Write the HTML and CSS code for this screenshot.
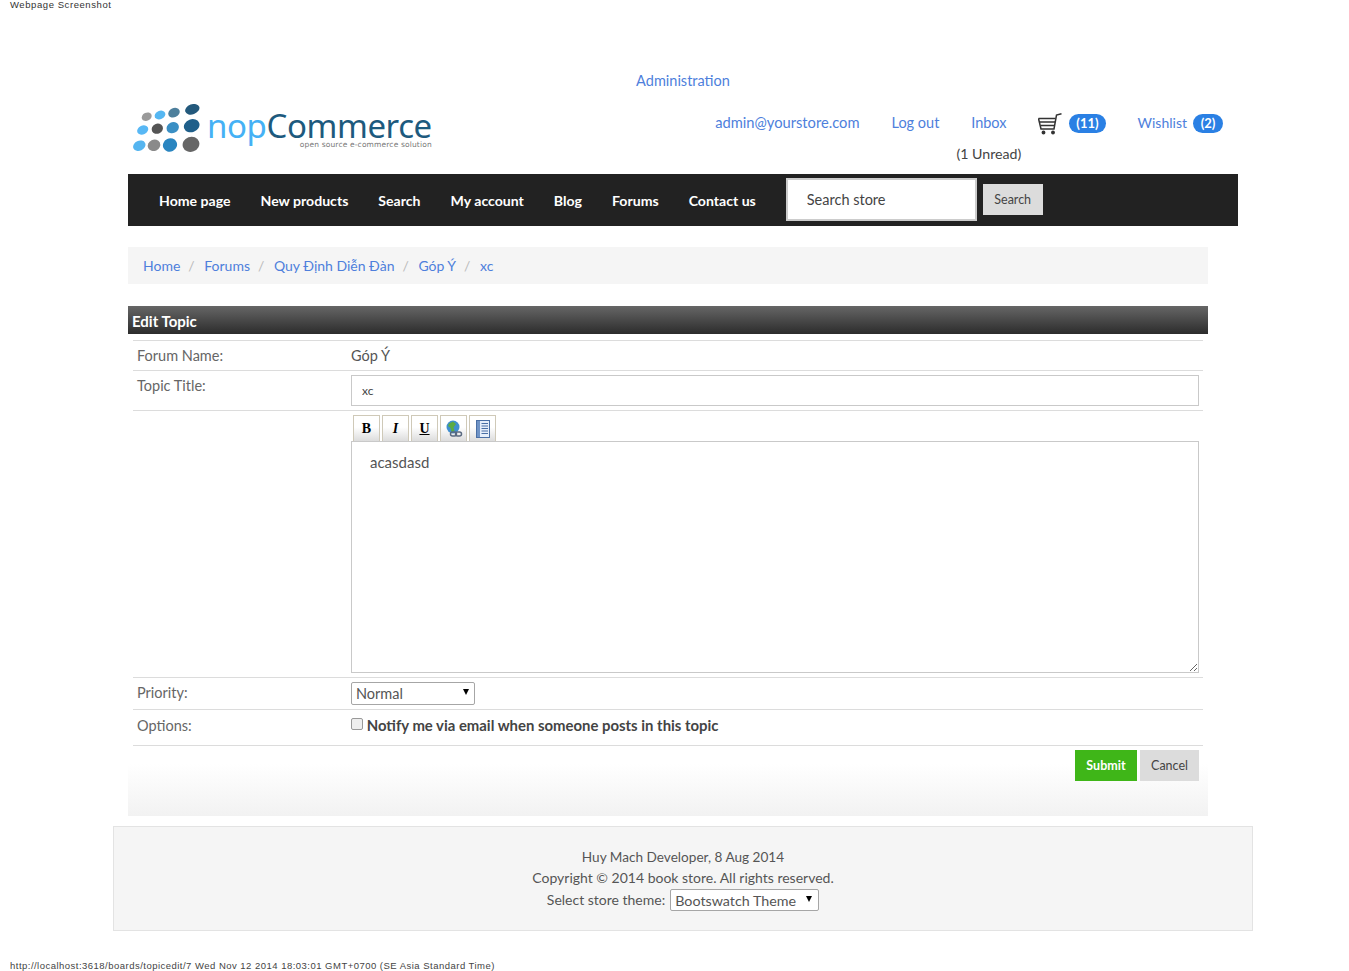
FILE: index.html
```html
<!DOCTYPE html>
<html lang="en">
<head>
    <meta charset="UTF-8">
    <title>Edit Topic</title>
    <link rel="stylesheet" href="styles.css">
</head>
<body>
    <div class="shot-label">Webpage Screenshot</div>

    <div class="master">
        <div class="admin-row"><a href="#">Administration</a></div>

        <div class="header">
            <a class="logo" href="#">
                <svg class="logo-dots" width="68" height="50" viewBox="0 0 68 50">
                    <ellipse cx="13.7" cy="12.7" rx="5.2" ry="4" fill="#9a9a9a" transform="rotate(-25 13.7 12.7)"/>
                    <ellipse cx="27" cy="11" rx="5.6" ry="4.2" fill="#55b7f2" transform="rotate(-25 27 11)"/>
                    <ellipse cx="41" cy="8.7" rx="6" ry="4.6" fill="#4d7f9c" transform="rotate(-25 41 8.7)"/>
                    <ellipse cx="59.3" cy="5.3" rx="7.4" ry="5" fill="#23597c" transform="rotate(-20 59.3 5.3)"/>
                    <ellipse cx="9.7" cy="26" rx="5.8" ry="4.4" fill="#58b8f5" transform="rotate(-25 9.7 26)"/>
                    <ellipse cx="24.3" cy="24.7" rx="5.8" ry="5" fill="#555" transform="rotate(-25 24.3 24.7)"/>
                    <ellipse cx="39.7" cy="23.7" rx="6.4" ry="5.4" fill="#3a8fc4" transform="rotate(-25 39.7 23.7)"/>
                    <ellipse cx="58.7" cy="21.7" rx="8" ry="6.4" fill="#1f5f8a" transform="rotate(-20 58.7 21.7)"/>
                    <ellipse cx="6.3" cy="41.7" rx="6.4" ry="5" fill="#55b5f0" transform="rotate(-25 6.3 41.7)"/>
                    <ellipse cx="21" cy="41.3" rx="6.4" ry="5.6" fill="#8a8a8a" transform="rotate(-25 21 41.3)"/>
                    <ellipse cx="37" cy="41" rx="7.2" ry="6.6" fill="#2a85c0" transform="rotate(-25 37 41)"/>
                    <ellipse cx="58" cy="40.3" rx="8.5" ry="7.5" fill="#666" transform="rotate(-20 58 40.3)"/>
                </svg>
                <span class="logo-text">
                    <span class="logo-name"><span class="logo-nop">nop</span>Commerce</span>
                    <span class="logo-tag">open source e-commerce solution</span>
                </span>
            </a>
            <ul class="header-links">
                <li class="email"><a href="#">admin@yourstore.com</a></li>
                <li><a href="#">Log out</a></li>
                <li class="inbox"><a href="#">Inbox</a><span class="unread">(1 Unread)</span></li>
                <li class="cart">
                    <svg width="24" height="22" viewBox="0 0 24 22" fill="none" stroke="#333" stroke-width="1.5">
                        <path d="M0.5 5.5H17.5M2 9H17M3 12.5H16.5"/>
                        <path d="M0.5 5.5L3 16H16L18.5 2L23.5 0.8"/>
                        <circle cx="5.5" cy="19.5" r="1.2" fill="#333"/>
                        <circle cx="15" cy="19.5" r="1.2" fill="#333"/>
                    </svg>
                    <span class="badge">(11)</span>
                </li>
                <li class="wishlist"><a href="#">Wishlist</a><span class="badge">(2)</span></li>
            </ul>
        </div>

        <div class="navbar">
            <a href="#">Home page</a>
            <a href="#">New products</a>
            <a href="#">Search</a>
            <a href="#">My account</a>
            <a href="#">Blog</a>
            <a href="#">Forums</a>
            <a href="#">Contact us</a>
            <input class="search-input" type="text" placeholder="Search store">
            <button class="btn btn-grey search-btn">Search</button>
        </div>

        <div class="content">
            <div class="breadcrumb">
                <a href="#">Home</a><span class="sep">/</span>
                <a href="#">Forums</a><span class="sep">/</span>
                <a href="#">Quy Định Diễn Đàn</a><span class="sep">/</span>
                <a href="#">Góp Ý</a><span class="sep">/</span>
                <a href="#">xc</a>
            </div>

            <div class="title-bar">Edit Topic</div>

            <div class="edit-form">
                <div class="row row-forum">
                    <div class="label">Forum Name:</div>
                    <div class="value">Góp Ý</div>
                </div>
                <div class="row row-title">
                    <div class="label">Topic Title:</div>
                    <div class="value"><input class="title-input" type="text" value="xc"></div>
                </div>
                <div class="row row-body">
                    <div class="label"></div>
                    <div class="value">
                        <div class="toolbar">
                            <button class="tool tool-b">B</button>
                            <button class="tool tool-i">I</button>
                            <button class="tool tool-u">U</button>
                            <button class="tool">
                                <svg width="18" height="18" viewBox="0 0 18 18">
                                    <circle cx="8" cy="7" r="6.5" fill="#3f8fd0"/>
                                    <path d="M4 3.5L8 1.5L11 4L8.5 7.5L9.5 11L6.5 12L5.5 8L3 6Z" fill="#5bab45"/>
                                    <g fill="none" stroke="#5a6a80" stroke-width="1.5">
                                        <rect x="5.5" y="12" width="6" height="4" rx="2"/>
                                        <rect x="10.5" y="12" width="6" height="4" rx="2"/>
                                    </g>
                                </svg>
                            </button>
                            <button class="tool">
                                <svg width="16" height="18" viewBox="0 0 16 18">
                                    <rect x="1.5" y="0.5" width="13" height="17" fill="#e6eefa" stroke="#4a6fa5"/>
                                    <rect x="2" y="1" width="3" height="16" fill="#6f93c6"/>
                                    <path d="M6.5 3.5H13M6.5 6H13M6.5 8.5H13M6.5 11H13M6.5 13.5H13" stroke="#4a6fa5"/>
                                </svg>
                            </button>
                        </div>
                        <textarea class="body-area">acasdasd</textarea>
                    </div>
                </div>
                <div class="row row-priority">
                    <div class="label">Priority:</div>
                    <div class="value">
                        <div class="select-box priority-select">Normal<span class="arrow"></span></div>
                    </div>
                </div>
                <div class="row row-options">
                    <div class="label">Options:</div>
                    <div class="value">
                        <input class="check" type="checkbox">
                        <strong>Notify me via email when someone posts in this topic</strong>
                    </div>
                </div>
                <div class="row-buttons">
                    <button class="btn btn-green">Submit</button>
                    <button class="btn btn-grey btn-cancel">Cancel</button>
                </div>
            </div>
        </div>
    </div>

    <div class="footer">
        <div class="footer-credit">Huy Mach Developer, 8 Aug 2014</div>
        <div>Copyright © 2014 book store. All rights reserved.</div>
        <div class="theme-row">Select store theme:
            <div class="select-box theme-select">Bootswatch Theme<span class="arrow"></span></div>
        </div>
    </div>

    <div class="shot-url">http://localhost:3618/boards/topicedit/7 Wed Nov 12 2014 18:03:01 GMT+0700 (SE Asia Standard Time)</div>
</body>
</html>
```

FILE: styles.css
```css
body {
    margin: 0;
    font-family: "Lato", "Noto Sans", sans-serif;
    font-size: 14.5px;
    line-height: 21px;
    color: #555;
    background: #fff;
    height: 971px;
    overflow: hidden;
}
a {
    color: #4e7fdc;
    text-decoration: none;
}
.shot-label {
    margin-left: 10px;
    height: 10px;
    font-family: "Liberation Sans", sans-serif;
    font-size: 9.5px;
    line-height: 10px;
    letter-spacing: 0.57px;
    color: #333;
}
.master {
    width: 1110px;
    margin-left: 128px;
}
.admin-row {
    width: 1110px;
    padding-top: 60px;
    text-align: center;
}
.header {
    display: flex;
    justify-content: space-between;
    height: 82px;
    margin-top: 1px;
}
.logo {
    display: flex;
    height: 50px;
    margin: 12px 0 0 5px;
}
.logo-text {
    display: flex;
    flex-direction: column;
    margin-left: 6px;
}
.logo-name {
    font-family: "Noto Sans", sans-serif;
    font-size: 33px;
    line-height: 30px;
    color: #1d5a7e;
    letter-spacing: -0.4px;
    margin-top: 7px;
}
.logo-nop {
    color: #45b1f5;
}
.logo-tag {
    font-family: "DejaVu Sans", sans-serif;
    font-size: 7.5px;
    line-height: 8px;
    letter-spacing: 0.15px;
    color: #777;
    text-align: right;
}
.header-links {
    display: flex;
    gap: 32px;
    list-style: none;
    margin: 20px 15px 0 0;
    padding: 0;
}
.header-links li {
    display: flex;
    align-items: flex-start;
    gap: 6px;
}
.header-links .email {
    font-size: 14.7px;
}
.header-links .inbox {
    flex-direction: column;
    align-items: center;
    gap: 10px;
    width: 35px;
}
.unread {
    white-space: nowrap;
    color: #444;
    font-size: 14.2px;
}
.badge {
    display: inline-block;
    min-width: 18px;
    padding: 0 6px;
    height: 19px;
    margin-top: 2px;
    border-radius: 10px;
    background: #2a80e4;
    color: #fff;
    font-size: 13px;
    font-weight: bold;
    line-height: 19px;
    text-align: center;
}
.header-links .cart {
    gap: 7px;
}
.cart svg {
    margin-top: 1px;
}
.cart .badge {
    padding: 0 7px;
}
.wishlist a {
    font-size: 14px;
}
.navbar {
    display: flex;
    align-items: center;
    gap: 30px;
    height: 52px;
    padding-left: 31px;
    background: #222;
    box-sizing: border-box;
}
.navbar a {
    color: #fff;
    font-weight: bold;
    font-size: 14.1px;
    margin-top: 1px;
}
.search-input {
    width: 191px;
    height: 43px;
    box-sizing: border-box;
    margin: -1px 0 0 0;
    padding: 0 18px 0 19px;
    border: 2px solid #ccc;
    background: #fff;
    font: 14.5px "Lato", sans-serif;
    color: #444;
}
.search-input::placeholder {
    color: #444;
    opacity: 1;
}
.navbar .search-btn {
    margin: -1px 0 0 -24px;
}
.btn {
    height: 31px;
    padding: 0 11.5px;
    border: 0;
    font: 12.5px "Lato", sans-serif;
}
.btn-grey {
    background: #dcdcdc;
    color: #444;
}
.btn-cancel {
    padding: 0 11px;
}
.btn-green {
    background: #3fb618;
    color: #fff;
    font-weight: bold;
}
.content {
    width: 1080px;
}
.breadcrumb {
    height: 37px;
    margin-top: 21px;
    padding-left: 15px;
    background: #f5f5f5;
    font-size: 14px;
    line-height: 38px;
}
.sep {
    color: #bbb;
    margin: 0 6px 0 8px;
}
.title-bar {
    height: 28px;
    margin-top: 22px;
    padding-left: 4px;
    background: linear-gradient(#666, #2c2c2c);
    color: #fff;
    font-size: 15px;
    font-weight: bold;
    line-height: 30px;
}
.edit-form {
    height: 482px;
    padding: 6px 5px 0;
    background: linear-gradient(#fff 430px, #f2f2f2);
    box-sizing: border-box;
}
.row {
    display: flex;
    border-top: 1px solid #dcdcdc;
    box-sizing: border-box;
}
.label {
    width: 218px;
    padding-left: 4px;
    box-sizing: border-box;
    color: #666;
}
.value {
    flex: 1;
    color: #555;
}
.row-forum {
    height: 30px;
    line-height: 30px;
}
.row-title {
    height: 40px;
}
.row-title .label {
    padding-top: 4px;
}
.title-input {
    display: block;
    width: 848px;
    height: 31px;
    box-sizing: border-box;
    margin: 4px 0 0;
    padding: 0 10px;
    border: 1px solid #c9c9c9;
    font: 12px "Lato", sans-serif;
    color: #444;
}
.row-body {
    height: 267px;
}
.toolbar {
    display: flex;
    gap: 2px;
    height: 30px;
    box-sizing: border-box;
    padding: 4px 0 0 2px;
}
.tool {
    display: flex;
    align-items: center;
    justify-content: center;
    width: 27px;
    height: 26px;
    padding: 0;
    border: 1px solid #cfc9b8;
    border-bottom: 0;
    background: linear-gradient(#fff 45%, #dcdcdc);
    font: bold 14px "Liberation Serif", serif;
    color: #000;
}
.tool-i {
    font-style: italic;
}
.tool-u {
    text-decoration: underline;
}
.body-area {
    display: block;
    width: 848px;
    height: 232px;
    box-sizing: border-box;
    margin: 0;
    padding: 10px 18px;
    border: 1px solid #c9c9c9;
    font: 15px/21px "Lato", sans-serif;
    color: #555;
}
.row-priority {
    height: 32px;
    line-height: 30px;
}
.select-box {
    display: flex;
    align-items: center;
    justify-content: space-between;
    box-sizing: border-box;
    border: 1px solid #a6a6a6;
    border-radius: 2px;
    background: #fff;
    line-height: 21px;
}
.arrow {
    width: 0;
    height: 0;
    border-left: 3.5px solid transparent;
    border-right: 3.5px solid transparent;
    border-top: 6px solid #000;
    margin-top: -3px;
}
.priority-select {
    width: 124px;
    height: 23px;
    margin-top: 4px;
    padding: 0 5px 0 4px;
}
.row-options {
    height: 36px;
    line-height: 30px;
}
.row-options .label {
    padding-top: 1px;
}
.check {
    appearance: none;
    width: 12px;
    height: 12px;
    margin: 0;
    border: 1px solid #999;
    border-radius: 2px;
    background: #eee;
    box-sizing: border-box;
    vertical-align: 1px;
}
.row-options strong {
    color: #444;
    font-size: 14.9px;
}
.row-buttons {
    display: flex;
    justify-content: flex-end;
    gap: 3px;
    padding: 4px 4px 0 0;
    border-top: 1px solid #dcdcdc;
}
.footer {
    width: 1140px;
    height: 105px;
    margin: 10px 0 0 113px;
    padding-top: 20px;
    box-sizing: border-box;
    border: 1px solid #e3e3e3;
    background: #f5f5f5;
    font-size: 14px;
    text-align: center;
    color: #555;
}
.footer-credit {
    font-size: 13.6px;
    line-height: 20px;
}
.theme-row {
    display: flex;
    justify-content: center;
    gap: 5px;
    margin-top: 1px;
}
.theme-select {
    width: 149px;
    height: 22px;
    padding: 0 6px 0 4px;
    font-size: 14.3px;
}
.shot-url {
    margin: 29px 0 0 10px;
    font-family: "Liberation Sans", sans-serif;
    font-size: 9.5px;
    line-height: 11px;
    letter-spacing: 0.48px;
    color: #444;
}
```
